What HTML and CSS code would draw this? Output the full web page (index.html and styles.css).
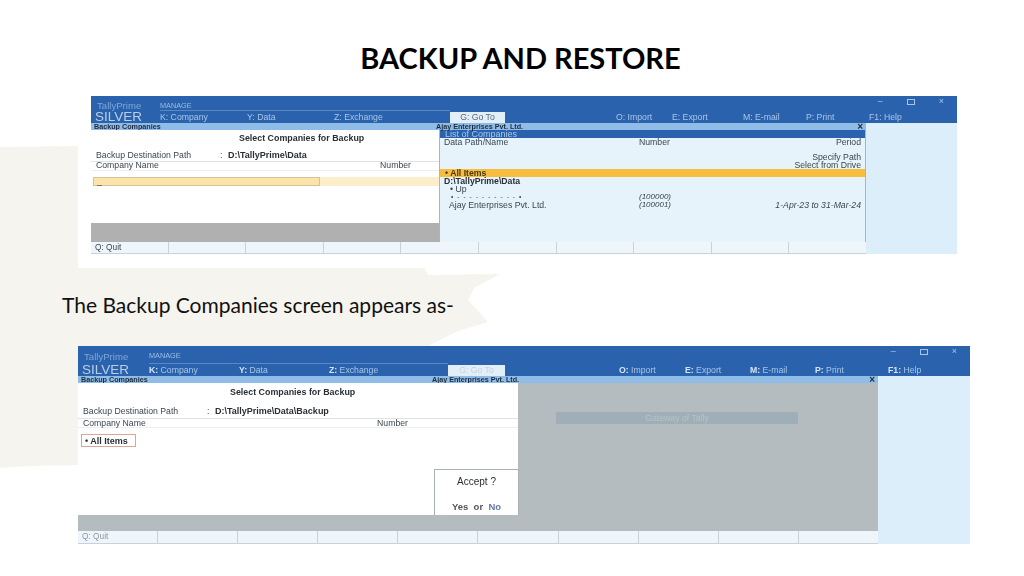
FILE: index.html
```html
<html>
<head>
    <link rel="stylesheet" href="styles.css">
</head>
<body>
<div class="slide">
    <svg class="swash" width="1024" height="576" viewBox="0 0 1024 576">
        <path d="M0 147 L78 146 L78 268 L425 268 L428 275 L500 274 L474 288 L468 300 L488 322 L458 331 L428 346 L78 346 L78 465 L30 466 L0 468 Z" fill="#f6f4ee" />
    </svg>

    <h1 class="title">BACKUP AND RESTORE</h1>

    <!-- first screen: list of companies open -->
    <div class="tally tally-one">
        <div class="head">
            <span class="product">TallyPrime</span>
            <span class="manage">MANAGE</span>
            <span class="edition">SILVER</span>
            <span class="item">K: Company</span>
            <span class="item">Y: Data</span>
            <span class="item">Z: Exchange</span>
            <span class="item"><span class="goto">G: Go To</span></span>
            <span class="item">O: Import</span>
            <span class="item">E: Export</span>
            <span class="item">M: E-mail</span>
            <span class="item">P: Print</span>
            <span class="item">F1: Help</span>
            <div class="winbtns"><span>&#8211;</span><span class="restore"></span><span>&#215;</span></div>
        </div>
        <div class="body">
            <div class="sub"><span>Backup Companies</span><span class="company">Ajay Enterprises Pvt. Ltd.</span><span class="close">&#215;</span></div>
            <div class="form">
                <div class="form-title">Select Companies for Backup</div>
                <div class="path"><span class="path-label">Backup Destination Path</span><span class="colon">:</span><b>D:\TallyPrime\Data</b></div>
                <div class="cols"><span>Company Name</span><span>Number</span></div>
                <div class="picker"><div class="picker-box">_</div></div>
            </div>
            <div class="list">
                <div class="list-title">List of Companies</div>
                <div class="list-cols"><span>Data Path/Name</span><span>Number</span><span>Period</span></div>
                <div class="list-right">Specify Path</div>
                <div class="list-right">Select from Drive</div>
                <div class="list-all">&#8226; All Items</div>
                <div class="list-row list-path">D:\TallyPrime\Data</div>
                <div class="list-row list-up">&#8226; Up</div>
                <div class="list-cols list-em"><span class="list-dots">&#8226; - - - - - - - - - - &#8226;</span><span>(100000)</span><span></span></div>
                <div class="list-cols list-em"><span class="list-name">Ajay Enterprises Pvt. Ltd.</span><span>(100001)</span><span>1-Apr-23 to 31-Mar-24</span></div>
            </div>
            <div class="side"></div>
            <div class="grey"></div>
            <div class="keys">
                <span>Q: Quit</span><span></span><span></span><span></span><span></span><span></span><span></span><span></span><span></span><span></span>
            </div>
        </div>
    </div>

    <p class="caption">The Backup Companies screen appears as-</p>

    <!-- second screen: accept prompt -->
    <div class="tally tally-two">
        <div class="head">
            <span class="product">TallyPrime</span>
            <span class="manage">MANAGE</span>
            <span class="edition">SILVER</span>
            <span class="item"><b>K:</b> Company</span>
            <span class="item"><b>Y:</b> Data</span>
            <span class="item"><b>Z:</b> Exchange</span>
            <span class="item"><span class="goto">G: Go To</span></span>
            <span class="item"><b>O:</b> Import</span>
            <span class="item"><b>E:</b> Export</span>
            <span class="item"><b>M:</b> E-mail</span>
            <span class="item"><b>P:</b> Print</span>
            <span class="item"><b>F1:</b> Help</span>
            <div class="winbtns"><span>&#8211;</span><span class="restore"></span><span>&#215;</span></div>
        </div>
        <div class="body">
            <div class="sub"><span>Backup Companies</span><span class="company">Ajay Enterprises Pvt. Ltd.</span><span class="close">&#215;</span></div>
            <div class="form">
                <div class="form-title">Select Companies for Backup</div>
                <div class="path"><span class="path-label">Backup Destination Path</span><span class="colon">:</span><b>D:\TallyPrime\Data\Backup</b></div>
                <div class="cols"><span>Company Name</span><span>Number</span></div>
                <div class="all-items">&#8226; All Items</div>
                <div class="accept">
                    <span>Accept ?</span>
                    <span class="accept-choice">Yes &nbsp;or&nbsp; <em>No</em></span>
                </div>
            </div>
            <div class="shade"><div class="gateway">Gateway of Tally</div></div>
            <div class="side"></div>
            <div class="grey"></div>
            <div class="keys">
                <span class="faded">Q: Quit</span><span></span><span></span><span></span><span></span><span></span><span></span><span></span><span></span><span></span>
            </div>
        </div>
    </div>
</div>
</body>
</html>
```

FILE: styles.css
```css
body {
    margin: 0;
    background-color: #fff;
    font-family: "Liberation Sans", Arial, sans-serif;
}

.slide {
    position: relative;
    width: 1024px;
    height: 576px;
    overflow: hidden;
}

.swash {
    position: absolute;
    left: 0;
    top: 0;
}

.title {
    position: relative;
    margin: 0;
    padding: 39px 0 0 17px;
    height: 57px;
    font-family: Lato, sans-serif;
    font-size: 29px;
    line-height: 37px;
    font-weight: 700;
    text-align: center;
    color: #000;
}

.caption {
    position: relative;
    margin: 0;
    padding: 39px 0 0 62px;
    height: 53px;
    font-family: Lato, sans-serif;
    font-size: 21px;
    line-height: 24px;
    color: #111;
}

/* Tally window screenshots */
.tally {
    position: relative;
    font-size: 8.7px;
    line-height: 8px;
    color: #3c4650;
    filter: blur(0.45px);
}

.tally-one {
    width: 866px;
    margin-left: 91px;
    --left: 348px;
    --side: 91px;
}

.tally-two {
    width: 892px;
    margin-left: 78px;
    --left: 440px;
    --side: 92px;
}

.head {
    position: relative;
    display: grid;
    align-items: center;
    background-color: #2a62ad;
    color: #a9c6e6;
}

.tally-one .head {
    height: 27px;
    grid-template-columns: 69px 87px 87px 116px 166px 56px 71px 63px 63px 1fr;
    grid-template-rows: 15px 12px;
}

.tally-two .head {
    height: 30px;
    grid-template-columns: 71px 90px 90px 119px 171px 66px 65px 65px 73px 1fr;
    grid-template-rows: 18px 12px;
}

.product {
    padding: 4px 0 0 6px;
    font-size: 9.6px;
    color: #7fa6d6;
}

.manage {
    grid-column: 2 / 5;
    align-self: stretch;
    padding-top: 6px;
    font-size: 7.3px;
    color: #9dbde2;
    border-bottom: 1px solid #5b88c3;
}

.edition {
    grid-row: 2;
    grid-column: 1;
    padding-left: 4px;
    font-size: 13.5px;
    color: #b9cfe8;
}

.item {
    grid-row: 2;
    white-space: nowrap;
}

.item b {
    color: #d5e4f4;
}

.goto {
    display: inline-block;
    width: 55px;
    height: 11px;
    line-height: 11px;
    text-align: center;
    background-color: #e2eff8;
    color: #56697c;
}

.tally-two .goto {
    width: 57px;
    color: #c3d2dc;
}

.winbtns {
    position: absolute;
    right: 13px;
    top: 0;
    display: flex;
    gap: 24px;
    font-size: 9px;
    line-height: 10px;
}

.restore {
    width: 6px;
    height: 4px;
    margin-top: 3px;
    border: 1px solid #a9c6e6;
}

.body {
    display: grid;
    grid-template-columns: var(--left) 1fr var(--side);
}

.tally-one .body {
    grid-template-rows: 7px 93px 19px 12px;
}

.tally-two .body {
    grid-template-rows: 7px 132px 16px 13px;
}

.sub {
    grid-column: 1 / 3;
    position: relative;
    display: flex;
    justify-content: space-between;
    padding: 0 3px;
    background-color: #8fbde8;
    color: #1d2a3a;
    font-size: 7.2px;
    line-height: 7px;
    font-weight: bold;
}

.company {
    position: absolute;
    left: calc(var(--left) - 3px);
}

.tally-two .company {
    left: calc(var(--left) - 86px);
}

.close {
    font-size: 10px;
}

.form {
    position: relative;
    background-color: #fff;
}

.form-title {
    height: 10px;
    padding: 4px 0 0 148px;
    font-size: 8.9px;
    font-weight: bold;
    color: #2a2f35;
}

.path {
    display: flex;
    padding: 7px 0 0 5px;
    height: 10px;
}

.path-label {
    width: 124px;
}

.colon {
    width: 8px;
}

.path b {
    font-size: 9px;
    color: #2a2f35;
}

.cols {
    display: flex;
    justify-content: space-between;
    padding: 0 28px 0 5px;
    line-height: 7px;
    height: 8px;
    border-top: 1px solid #e2e2e2;
    border-bottom: 1px solid #eee;
}

.tally-two .form-title {
    padding: 5px 0 0 152px;
}

.tally-two .path {
    padding-top: 9px;
    height: 11px;
}

.tally-two .cols {
    padding-right: 110px;
    line-height: 8px;
}

.picker {
    margin: 6px 0 0 2px;
    height: 9px;
    background-color: #fbeecb;
}

.picker-box {
    width: 222px;
    height: 7px;
    line-height: 7px;
    padding-left: 3px;
    background-color: #fbe4ac;
    border: 1px solid #d9c58b;
}

.all-items {
    width: 50px;
    margin: 6px 0 0 3px;
    padding: 2px 0 1px 3px;
    font-size: 9px;
    font-weight: bold;
    color: #2a2f35;
    border: 1px solid #d8a79a;
}

.accept {
    position: absolute;
    right: -1px;
    bottom: 0;
    width: 85px;
    height: 46px;
    display: flex;
    flex-direction: column;
    align-items: center;
    justify-content: space-between;
    padding: 8px 0 4px;
    box-sizing: border-box;
    background-color: #fff;
    border: 1px solid #aab0b4;
    border-bottom: none;
    font-size: 10px;
    color: #2a2f35;
}

.accept-choice {
    font-size: 9.5px;
    font-weight: bold;
    color: #555;
}

.accept-choice em {
    font-style: normal;
    color: #5f79a8;
}

.list {
    grid-row: 2 / 4;
    background-color: #e6f3fb;
    border-left: 1px solid #a9b6bd;
    border-right: 1px solid #a9b6bd;
}

.list-title {
    box-sizing: border-box;
    padding: 1px 0 0 5px;
    height: 8px;
    line-height: 7px;
    background-color: #2a62ad;
    color: #a9c6e6;
    font-size: 9px;
}

.list-cols {
    display: grid;
    grid-template-columns: 195px 1fr auto;
    padding: 0 4px;
    height: 8px;
}

.list-right {
    padding-right: 4px;
    text-align: right;
}

.list-cols + .list-right {
    margin-top: 7px;
}

.list-all {
    padding-left: 5px;
    background-color: #f6bd3e;
    color: #4a3a10;
    font-weight: bold;
}

.list-row {
    padding-left: 4px;
}

.list-path {
    font-weight: bold;
    color: #2a2f35;
}

.list-up {
    padding-left: 10px;
}

.list-em {
    font-style: italic;
}

.list-em span:nth-child(2) {
    font-size: 8px;
}

.list-dots {
    padding-left: 7px;
    font-style: normal;
    font-size: 6.5px;
    letter-spacing: 1.1px;
    white-space: nowrap;
}

.list-name {
    font-style: normal;
    padding-left: 5px;
}

.shade {
    grid-row: 2 / 4;
    padding: 29px 80px 0 38px;
    background-color: #b4bcc0;
}

.gateway {
    height: 12px;
    line-height: 12px;
    text-align: center;
    background-color: #a0afb7;
    color: #b6c2c8;
}

.side {
    grid-row: 1 / 5;
    grid-column: 3;
    background-color: #dceefa;
}

.grey {
    grid-column: 1;
    grid-row: 3;
    background-color: #b0b0b0;
}

.tally-two .grey {
    background-color: #b4bcc0;
}

.keys {
    grid-column: 1 / 3;
    display: grid;
    grid-template-columns: repeat(10, 1fr);
    background-color: #c9d2d8;
    gap: 1px;
    padding-bottom: 1px;
    font-size: 8.3px;
    line-height: 11px;
}

.keys span {
    padding-left: 4px;
    background-color: #eef6fb;
}

.faded {
    color: #8a98a5;
}
```
